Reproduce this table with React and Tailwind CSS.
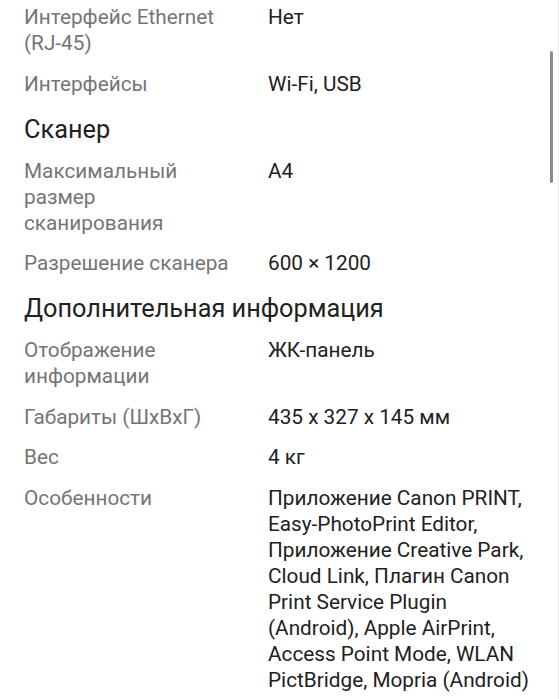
const sections = [
  {
    title: null,
    rows: [
      ["Интерфейс Ethernet (RJ-45)", "Нет"],
      ["Интерфейсы", "Wi-Fi, USB"],
    ],
  },
  {
    title: "Сканер",
    rows: [
      ["Максимальный размер сканирования", "A4"],
      ["Разрешение сканера", "600 × 1200"],
    ],
  },
  {
    title: "Дополнительная информация",
    rows: [
      ["Отображение информации", "ЖК-панель"],
      ["Габариты (ШхВхГ)", "435 x 327 x 145 мм"],
      ["Вес", "4 кг"],
      [
        "Особенности",
        "Приложение Canon PRINT, Easy-PhotoPrint Editor, Приложение Creative Park, Cloud Link, Плагин Canon Print Service Plugin (Android), Apple AirPrint, Access Point Mode, WLAN PictBridge, Mopria (Android)",
      ],
    ],
  },
];

function Row({ label, value }) {
  return (
    <div className="grid grid-cols-[212px_1fr] gap-x-[32px] pb-[14.6px] text-[20.75px] leading-[26px]">
      <div className="text-[#757575]">{label}</div>
      <div className="text-[#212121]">{value}</div>
    </div>
  );
}

export default function App() {
  return (
    <div
      className="relative h-[699px] overflow-hidden bg-white"
      style={{ fontFamily: "Roboto, 'Noto Sans', sans-serif" }}
    >
      <div className="pl-6 pr-6 pt-[4px]">
        {sections.map((s, i) => (
          <div key={i}>
            {s.title && (
              <h2 className="mt-[3.4px] mb-[13px] text-[25.3px] leading-[30px] text-[#212121]">
                {s.title}
              </h2>
            )}
            {s.rows.map(([l, v]) => (
              <Row key={l} label={l} value={v} />
            ))}
          </div>
        ))}
      </div>
      <div className="absolute right-[6px] top-[51px] h-[132px] w-[3px] rounded-full bg-[#8a8a8a]" />
      <div className="absolute right-0 top-0 h-full w-px bg-[#ececec]" />
    </div>
  );
}
